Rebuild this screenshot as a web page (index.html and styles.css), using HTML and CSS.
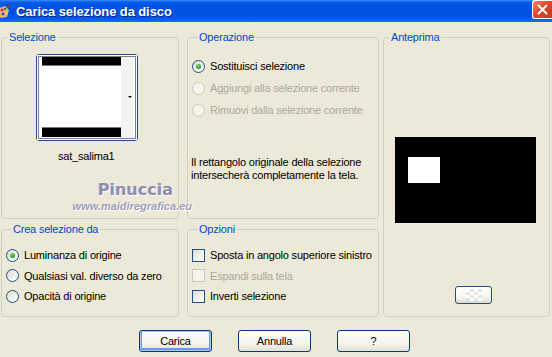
FILE: index.html
```html
<!DOCTYPE html>
<html lang="it">
<head>
<meta charset="UTF-8" />
<title>Carica selezione da disco</title>
<link rel="stylesheet" href="styles.css">
</head>
<body>

<div class="dialog">
  <!-- TITLE BAR -->
  <div class="titlebar">
    <svg class="app-icon" width="12" height="16" viewBox="0 0 12 16" aria-hidden="true">
      <path d="M0 4 L6 2 L10 6 L8 13 L2 14 L0 12 Z" fill="#e9b08a"/>
      <circle cx="3" cy="6" r="1.5" fill="#d8322a"/>
      <circle cx="6" cy="5" r="1.3" fill="#2f7a2f"/>
      <circle cx="4" cy="10" r="1.4" fill="#2b4fc8"/>
      <circle cx="7" cy="9" r="1.2" fill="#f2d230"/>
      <path d="M8 2 L11 0 L11.6 1 L9 4 Z" fill="#7a4a20"/>
    </svg>
    <span class="title">Carica selezione da disco</span>
    <button class="close" aria-label="Chiudi">
      <svg width="11" height="11" viewBox="0 0 11 11"><path d="M1.5 1.5 L9.5 9.5 M9.5 1.5 L1.5 9.5" stroke="#fff" stroke-width="2" stroke-linecap="round"/></svg>
    </button>
  </div>

  <div class="content">
    <div class="panels">
      <!-- Selezione -->
      <fieldset class="group g-sel">
        <legend>Selezione</legend>
        <div class="thumb">
          <svg width="100" height="85" viewBox="0 0 100 85" aria-hidden="true">
            <rect x="0" y="0" width="100" height="85" fill="#fff"/>
            <rect x="84" y="2" width="12" height="81" fill="#f3f3f1"/>
            <rect x="5" y="2" width="79" height="8" fill="#000"/>
            <rect x="5" y="10" width="79" height="1" fill="#777"/>
            <rect x="5" y="72" width="79" height="1" fill="#777"/>
            <rect x="5" y="73" width="79" height="9" fill="#000"/>
            <path d="M91 41 L95 41 L93 43 Z" fill="#000"/>
            <rect x="1.5" y="1.5" width="97" height="82" fill="none" stroke="#000" stroke-dasharray="1 1"/>
          </svg>
        </div>
        <div class="thumb-name">sat_salima1</div>
      </fieldset>

      <!-- Operazione -->
      <fieldset class="group g-op">
        <legend>Operazione</legend>
        <div class="option">
          <span class="radio checked"></span>Sostituisci selezione
        </div>
        <div class="option disabled">
          <span class="radio"></span>Aggiungi alla selezione corrente
        </div>
        <div class="option disabled">
          <span class="radio"></span>Rimuovi dalla selezione corrente
        </div>
        <p class="note">Il rettangolo originale della selezione intersecherà completamente la tela.</p>
      </fieldset>

      <!-- Anteprima -->
      <fieldset class="group g-prev">
        <legend>Anteprima</legend>
        <div class="preview">
          <div class="preview-sel"></div>
        </div>
        <button class="small-btn" aria-label="Sfondo"><span class="checker"></span></button>
      </fieldset>

      <!-- Crea selezione da -->
      <fieldset class="group g-crea">
        <legend>Crea selezione da</legend>
        <div class="option">
          <span class="radio checked"></span>Luminanza di origine
        </div>
        <div class="option">
          <span class="radio"></span>Qualsiasi val. diverso da zero
        </div>
        <div class="option">
          <span class="radio"></span>Opacità di origine
        </div>
      </fieldset>

      <!-- Opzioni -->
      <fieldset class="group g-opt">
        <legend>Opzioni</legend>
        <div class="option">
          <span class="check"></span>Sposta in angolo superiore sinistro
        </div>
        <div class="option disabled">
          <span class="check"></span>Espandi sulla tela
        </div>
        <div class="option">
          <span class="check"></span>Inverti selezione
        </div>
      </fieldset>
    </div>

    <div class="buttons">
      <button class="btn default">Carica</button>
      <button class="btn">Annulla</button>
      <button class="btn">?</button>
    </div>
  </div>

  <!-- watermark -->
  <div class="watermark">
    <span class="wm-name">Pinuccia</span>
    <span class="wm-url">www.maidiregrafica.eu</span>
  </div>
</div>

</body>
</html>
```

FILE: styles.css
```css
/* Reset */
*, *::before, *::after {
  box-sizing: border-box;
}
body {
  margin: 0;
  background: #ece9d8;
  font-family: 'Liberation Sans', Arial, sans-serif;
  font-size: 11px;
  letter-spacing: -0.2px;
  color: #000;
}
button {
  font-family: inherit;
  font-size: 11px;
  letter-spacing: -0.2px;
  cursor: pointer;
}

/* Dialog */
.dialog {
  position: relative;
  width: 552px;
  height: 357px;
  background: #ece9d8;
  overflow: hidden;
}

/* Title bar */
.titlebar {
  height: 22px;
  display: flex;
  align-items: center;
  background: linear-gradient(#3a8cff 0, #0a5fe8 2px, #0054e3 5px, #0052e0 14px, #0a5be8 19px, #1e6df2 22px);
}
.app-icon {
  flex: none;
  margin-left: -1px;
  margin-top: 1px;
}
.title {
  margin-left: 5px;
  color: #fff;
  font-weight: bold;
  font-size: 13px;
  letter-spacing: -0.1px;
  text-shadow: 1px 1px 0 #0a1e8c;
}
.close {
  margin-left: auto;
  margin-right: 0;
  margin-top: -3px;
  width: 20px;
  height: 19px;
  padding: 0;
  display: flex;
  align-items: center;
  justify-content: center;
  border: 1px solid #fff;
  border-right: none;
  border-radius: 3px 0 0 3px;
  background: linear-gradient(135deg, #f08a6a, #e04a2a 45%, #c8381c);
}

/* Content */
.content {
  padding: 9px 0 0 1px;
}
.panels {
  display: grid;
  grid-template-columns: 178px 8px 192px 4px 167px;
  grid-template-rows: 188px 94px;
  row-gap: 4px;
}
.group {
  margin: 0;
  padding: 0;
  min-width: 0;
  border: 1px solid #d0d0bf;
  border-radius: 4px;
}
.group legend {
  margin-left: 5px;
  padding: 0 2px;
  color: #0046d5;
  line-height: 13px;
}
.g-sel  { grid-column: 1; grid-row: 1; }
.g-op   { grid-column: 3; grid-row: 1; padding-left: 4px; }
.g-prev { grid-column: 5; grid-row: 1 / span 2; }
.g-crea { grid-column: 1; grid-row: 2; padding-left: 4px; padding-top: 9px; }
.g-opt  { grid-column: 3; grid-row: 2; padding-left: 4px; padding-top: 9px; }

/* Selezione */
.thumb {
  width: 102px;
  height: 87px;
  margin: 10px 0 0 34px;
  border: 1px solid #1c5180;
  border-radius: 3px;
  background: #fff;
}
.thumb svg {
  display: block;
}
.thumb-name {
  margin: 9px 0 0 56px;
  line-height: 13px;
}

/* Options */
.option {
  display: flex;
  align-items: center;
  height: 20.5px;
  white-space: nowrap;
}
.g-op .option:first-of-type {
  margin-top: 11px;
}
.g-op .option {
  height: 22px;
}
.option.disabled {
  color: #aca899;
}
.radio, .check {
  flex: none;
  width: 13px;
  height: 13px;
  margin-right: 5px;
  border: 1px solid #1c5180;
  background: linear-gradient(135deg, #dcdad2, #f4f3ee 60%, #fff);
}
.radio {
  border-radius: 50%;
  display: flex;
  align-items: center;
  justify-content: center;
}
.radio.checked::after {
  content: "";
  width: 5px;
  height: 5px;
  border-radius: 50%;
  background: radial-gradient(circle at 40% 35%, #7ddc7d, #21a121 60%, #1a8a1a);
}
.disabled .radio, .disabled .check {
  border-color: #cac8bb;
  background: #f5f4ea;
}
.check {
  border-radius: 0;
}
.note {
  margin: 35px 0 0 -1px;
  line-height: 13px;
}

/* Anteprima */
.preview {
  width: 141px;
  height: 86px;
  margin: 93px 0 0 11px;
  background: #000;
  padding: 20px 0 0 13px;
}
.preview-sel {
  width: 32px;
  height: 26px;
  background: #fff;
}
.small-btn {
  display: block;
  width: 37px;
  height: 18px;
  margin: 63px 0 0 71px;
  padding: 0;
  border: 1px solid #1c5180;
  border-radius: 3px;
  background: linear-gradient(#fff, #f4f3ee 70%, #dcd9cc);
}
.checker {
  display: block;
  width: 16px;
  height: 12px;
  margin: 0 auto;
  background: conic-gradient(#e4e4e4 25%, #fff 0 50%, #e4e4e4 0 75%, #fff 0) 0 0 / 8px 6px;
}

/* Buttons */
.buttons {
  display: flex;
  justify-content: center;
  gap: 26px;
  margin-top: 13px;
  padding-right: 4px;
}
.btn {
  width: 73px;
  height: 22px;
  padding: 0;
  border: 1px solid #003c74;
  border-radius: 3px;
  background: linear-gradient(#fff, #f5f4ef 60%, #e3e0d5);
  color: #000;
}
.btn.default {
  box-shadow: inset 0 0 0 1px #a8c6f5, inset 0 -1px 0 2px #6f96e8;
}

/* Watermark */
.watermark {
  position: absolute;
  left: 68px;
  top: 181px;
  display: flex;
  flex-direction: column;
  align-items: flex-end;
  width: 124px;
  pointer-events: none;
  letter-spacing: 0;
}
.wm-name {
  margin-right: 19px;
  font-family: 'DejaVu Sans', sans-serif;
  font-weight: bold;
  font-size: 16px;
  line-height: 18px;
  color: #8f8fae;
  text-shadow: 1px 1px 0 #fff, -1px 0 0 #d8d6e6;
}
.wm-url {
  font-weight: bold;
  font-style: italic;
  font-size: 11px;
  line-height: 14px;
  color: #a09eb8;
  text-shadow: 1px 1px 0 #fff;
}
```
